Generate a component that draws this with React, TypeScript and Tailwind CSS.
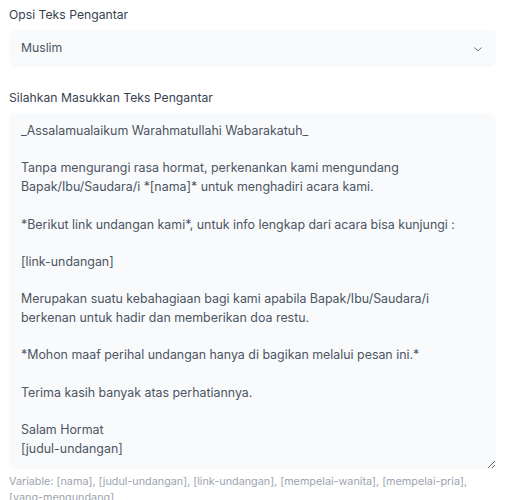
import { useState } from 'react';

const OPTIONS = ['Muslim', 'Nasrani', 'Hindu', 'Buddha', 'Umum'];

const DEFAULT_TEXT = `_Assalamualaikum Warahmatullahi Wabarakatuh_

Tanpa mengurangi rasa hormat, perkenankan kami mengundang Bapak/Ibu/Saudara/i *[nama]* untuk menghadiri acara kami.

*Berikut link undangan kami*, untuk info lengkap dari acara bisa kunjungi :

[link-undangan]

Merupakan suatu kebahagiaan bagi kami apabila Bapak/Ibu/Saudara/i berkenan untuk hadir dan memberikan doa restu.

*Mohon maaf perihal undangan hanya di bagikan melalui pesan ini.*

Terima kasih banyak atas perhatiannya.

Salam Hormat
[judul-undangan]`;

export default function App() {
  const [option, setOption] = useState('Muslim');
  const [text, setText] = useState(DEFAULT_TEXT);

  return (
    <div className="min-h-screen bg-white font-['Inter',sans-serif]">
      <div className="ml-[9px] w-[487px] pt-[6px]">
        <label className="block text-[12.2px] leading-[18px] text-[#374151]">Opsi Teks Pengantar</label>
        <div className="relative mt-[6px]">
          <select
            value={option}
            onChange={e => setOption(e.target.value)}
            className="block h-[37px] w-full appearance-none rounded-[6px] bg-[#f9fafb] pl-[12px] pr-8 text-[12.2px] text-[#4b5563] outline-none"
          >
            {OPTIONS.map(o => (
              <option key={o} value={o}>
                {o}
              </option>
            ))}
          </select>
          <svg
            className="pointer-events-none absolute right-[12px] top-1/2 h-[12px] w-[12px] -translate-y-1/2 text-[#6b7280]"
            viewBox="0 0 20 20"
            fill="none"
            stroke="currentColor"
            strokeWidth="1.6"
            strokeLinecap="round"
            strokeLinejoin="round"
          >
            <path d="M4.5 8l5.5 5 5.5-5" />
          </svg>
        </div>

        <label className="mt-[22px] block text-[12.2px] leading-[18px] text-[#374151]">
          Silahkan Masukkan Teks Pengantar
        </label>
        <textarea
          value={text}
          onChange={e => setText(e.target.value)}
          className="mt-[6px] block h-[356px] w-full resize-y rounded-[6px] bg-[#f9fafb] px-[12px] pt-[9px] text-[12.4px] leading-[18.7px] text-[#4b5563] outline-none"
        />
        <p className="mt-[5px] text-[10.8px] leading-[16px] text-[#9ca3af]">
          Variable: [nama], [judul-undangan], [link-undangan], [mempelai-wanita], [mempelai-pria], [yang-mengundang]
        </p>
      </div>
    </div>
  );
}
